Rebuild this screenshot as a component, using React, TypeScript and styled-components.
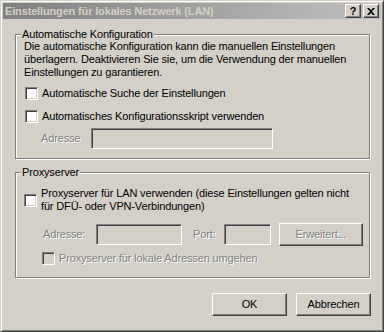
import React from 'react';
import styled, { createGlobalStyle } from 'styled-components';

const GlobalStyle = createGlobalStyle`
  html, body {
    margin: 0;
    padding: 0;
    background: #d4d0c8;
  }
  body {
    font-family: "Liberation Sans", Arial, sans-serif;
    font-size: 11px;
    line-height: 13px;
    letter-spacing: -0.15px;
    color: #000;
  }
`;

const Window = styled.div`
  box-sizing: border-box;
  width: 384px;
  height: 332px;
  background: #d4d0c8;
  border: 1px solid;
  border-color: #d4d0c8 #404040 #404040 #d4d0c8;
  box-shadow: inset 1px 1px #fff, inset -1px -1px #808080;
  padding: 2px;
  display: flex;
  flex-direction: column;
`;

const TitleBar = styled.div`
  height: 16px;
  display: flex;
  align-items: center;
  padding: 0 2px;
  background: linear-gradient(to right, #808080, #c0c0c0);
`;

const TitleText = styled.span`
  color: #d4d0c8;
  font-weight: bold;
  line-height: 16px;
  white-space: nowrap;
`;

const TitleButtons = styled.div`
  margin-left: auto;
  display: flex;
  gap: 2px;
`;

const CaptionButton = styled.div`
  box-sizing: border-box;
  width: 16px;
  height: 14px;
  background: #d4d0c8;
  border: 1px solid;
  border-color: #fff #404040 #404040 #fff;
  box-shadow: inset -1px -1px #808080, inset 1px 1px #d4d0c8;
  display: flex;
  align-items: center;
  justify-content: center;
  font-weight: bold;
  font-size: 11px;
  line-height: 12px;
  color: #000;
`;

const Body = styled.div`
  flex: 1;
  display: flex;
  flex-direction: column;
  padding: 15px 11px 0 12px;
`;

const Group = styled.div<{ $gap?: number }>`
  border: 1px solid #808080;
  box-shadow: 1px 1px 0 #fff, inset 1px 1px 0 #fff;
  display: flex;
  flex-direction: column;
  margin-top: ${p => p.$gap ?? 0}px;
`;

const Legend = styled.div`
  align-self: flex-start;
  margin: -7px 0 0 5px;
  padding: 0 1px;
  background: #d4d0c8;
  line-height: 13px;
`;

const Description = styled.div`
  margin: -1px 0 0 8px;
  line-height: 13px;
`;

const CheckRow = styled.label<{ $top: number; $left: number; $disabled?: boolean }>`
  display: flex;
  align-items: center;
  gap: 4px;
  margin: ${p => p.$top}px 0 0 ${p => p.$left}px;
  line-height: 13px;
  color: ${p => (p.$disabled ? '#808080' : '#000')};
  text-shadow: ${p => (p.$disabled ? '1px 1px 0 #fff' : 'none')};
`;

const CheckBox = styled.span<{ $disabled?: boolean }>`
  box-sizing: border-box;
  flex: none;
  width: 13px;
  height: 13px;
  background: ${p => (p.$disabled ? '#d4d0c8' : '#fff')};
  border: 1px solid;
  border-color: #808080 #fff #fff #808080;
  box-shadow: inset 1px 1px #404040, inset -1px -1px #d4d0c8;
`;

const FieldRow = styled.div<{ $top: number; $left: number }>`
  display: flex;
  align-items: center;
  margin: ${p => p.$top}px 0 0 ${p => p.$left}px;
`;

const FieldLabel = styled.span<{ $width: number; $ml?: number }>`
  width: ${p => p.$width}px;
  margin-left: ${p => p.$ml ?? 0}px;
  flex: none;
  color: #808080;
  text-shadow: 1px 1px 0 #fff;
  white-space: nowrap;
`;

const Edit = styled.div<{ $width: number }>`
  box-sizing: border-box;
  flex: none;
  width: ${p => p.$width}px;
  height: 21px;
  background: #d4d0c8;
  border: 1px solid;
  border-color: #808080 #fff #fff #808080;
  box-shadow: inset 1px 1px #404040, inset -1px -1px #d4d0c8;
`;

const Button = styled.div<{ $width: number; $disabled?: boolean; $ml?: number }>`
  box-sizing: border-box;
  flex: none;
  width: ${p => p.$width}px;
  height: 23px;
  margin-left: ${p => p.$ml ?? 0}px;
  background: #d4d0c8;
  border: 1px solid;
  border-color: #fff #404040 #404040 #fff;
  box-shadow: inset -1px -1px #808080, inset 1px 1px #d4d0c8;
  display: flex;
  align-items: center;
  justify-content: center;
  color: ${p => (p.$disabled ? '#808080' : '#000')};
  text-shadow: ${p => (p.$disabled ? '1px 1px 0 #fff' : 'none')};
`;

const ButtonRow = styled.div`
  display: flex;
  justify-content: flex-end;
  gap: 9px;
  margin: 15px -1px 0 0;
`;

const CloseGlyph = () => (
  <svg width="8" height="7" viewBox="0 0 8 7">
    <path d="M0 0h2l2 2 2-2h2L5 3.5 8 7H6L4 5 2 7H0l3-3.5z" fill="#000" />
  </svg>
);

export default function App() {
  return (
    <>
      <GlobalStyle />
      <Window>
        <TitleBar>
          <TitleText>Einstellungen für lokales Netzwerk (LAN)</TitleText>
          <TitleButtons>
            <CaptionButton>?</CaptionButton>
            <CaptionButton>
              <CloseGlyph />
            </CaptionButton>
          </TitleButtons>
        </TitleBar>
        <Body>
          <Group style={{ paddingBottom: 9 }}>
            <Legend>Automatische Konfiguration</Legend>
            <Description>
              Die automatische Konfiguration kann die manuellen Einstellungen
              <br />
              überlagern. Deaktivieren Sie sie, um die Verwendung der manuellen
              <br />
              Einstellungen zu garantieren.
            </Description>
            <CheckRow $top={8} $left={9}>
              <CheckBox />
              Automatische Suche der Einstellungen
            </CheckRow>
            <CheckRow $top={10} $left={9}>
              <CheckBox />
              Automatisches Konfigurationsskript verwenden
            </CheckRow>
            <FieldRow $top={5} $left={25}>
              <FieldLabel $width={50}>Adresse</FieldLabel>
              <Edit $width={182} />
            </FieldRow>
          </Group>
          <Group $gap={13} style={{ paddingBottom: 12 }}>
            <Legend>Proxyserver</Legend>
            <CheckRow $top={8} $left={8}>
              <CheckBox />
              <span>
                Proxyserver für LAN verwenden (diese Einstellungen gelten nicht
                <br />
                für DFÜ- oder VPN-Verbindungen)
              </span>
            </CheckRow>
            <FieldRow $top={10} $left={27}>
              <FieldLabel $width={53}>Adresse:</FieldLabel>
              <Edit $width={86} />
              <FieldLabel $width={31} $ml={11}>
                Port:
              </FieldLabel>
              <Edit $width={47} />
              <Button $width={84} $ml={8} $disabled>
                Erweitert...
              </Button>
            </FieldRow>
            <CheckRow $top={6} $left={26} $disabled>
              <CheckBox $disabled />
              Proxyserver für lokale Adressen umgehen
            </CheckRow>
          </Group>
          <ButtonRow>
            <Button $width={75}>OK</Button>
            <Button $width={75}>Abbrechen</Button>
          </ButtonRow>
        </Body>
      </Window>
    </>
  );
}
